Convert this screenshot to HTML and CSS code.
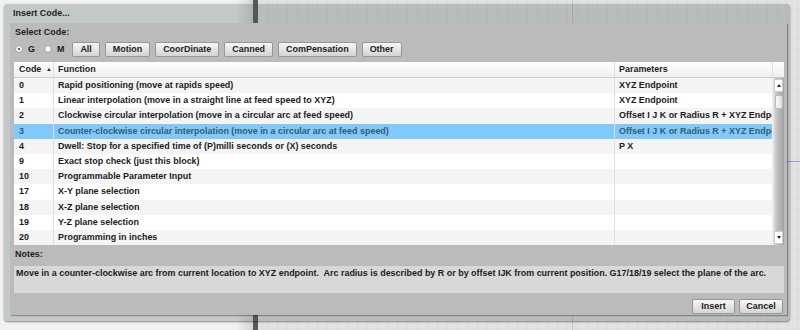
FILE: index.html
```html
<!DOCTYPE html>
<html lang="en">
<head>
    <meta charset="UTF-8">
    <meta name="viewport" content="width=device-width, initial-scale=1.0">
    <title>Insert Code</title>
    <link rel="stylesheet" href="styles.css">
</head>
<body>
    <!-- workspace behind the dialog -->
    <div class="desk">
        <div class="side"></div>
        <div class="side-edge"></div>
        <div class="split"></div>
        <div class="canvas">
            <div class="axis"></div>
            <div class="toolpath"></div>
        </div>
    </div>

    <div class="dialog">
        <div class="title">Insert Code...</div>
        <div class="panel">
            <div class="label">Select Code:</div>
            <div class="filters">
                <label class="radio checked"><span class="dot"></span>G</label>
                <label class="radio"><span class="dot"></span>M</label>
                <button class="btn">All</button>
                <button class="btn">Motion</button>
                <button class="btn">CoorDinate</button>
                <button class="btn">Canned</button>
                <button class="btn">ComPensation</button>
                <button class="btn">Other</button>
            </div>

            <div class="grid">
                <div class="head">
                    <div class="cell code">Code <span class="sort"></span></div>
                    <div class="cell fn">Function</div>
                    <div class="cell par">Parameters</div>
                    <div class="cell corner"></div>
                </div>
                <div class="body">
                    <div class="rows" id="rows"></div>
                    <div class="scrollbar">
                        <div class="sb-btn"><span class="arrow up"></span></div>
                        <div class="thumb"></div>
                        <div class="track"></div>
                        <div class="sb-btn"><span class="arrow down"></span></div>
                    </div>
                </div>
            </div>

            <div class="label">Notes:</div>
            <div class="notes">Move in a counter-clockwise arc from current location to XYZ endpoint.&nbsp; Arc radius is described by R or by offset IJK from current position. G17/18/19 select the plane of the arc.</div>

            <div class="actions">
                <button class="btn act">Insert</button>
                <button class="btn act wide">Cancel</button>
            </div>
        </div>
    </div>

    <script>
        // G codes shown in the list
        const codes = [
            { code: "0", fn: "Rapid positioning (move at rapids speed)", par: "XYZ Endpoint" },
            { code: "1", fn: "Linear interpolation (move in a straight line at feed speed to XYZ)", par: "XYZ Endpoint" },
            { code: "2", fn: "Clockwise circular interpolation (move in a circular arc at feed speed)", par: "Offset I J K or Radius R + XYZ Endpoint" },
            { code: "3", fn: "Counter-clockwise circular interpolation (move in a circular arc at feed speed)", par: "Offset I J K or Radius R + XYZ Endpoint" },
            { code: "4", fn: "Dwell: Stop for a specified time of (P)milli seconds or (X) seconds", par: "P X" },
            { code: "9", fn: "Exact stop check (just this block)", par: "" },
            { code: "10", fn: "Programmable Parameter Input", par: "" },
            { code: "17", fn: "X-Y plane selection", par: "" },
            { code: "18", fn: "X-Z plane selection", par: "" },
            { code: "19", fn: "Y-Z plane selection", par: "" },
            { code: "20", fn: "Programming in inches", par: "" },
        ];

        const rows = document.getElementById('rows');
        const selected = "3";

        codes.forEach(item => {
            const row = document.createElement('div');
            row.classList.add('row');
            if (item.code === selected) row.classList.add('sel');
            row.innerHTML = `
                <div class="cell code">${item.code}</div>
                <div class="cell fn">${item.fn}</div>
                <div class="cell par">${item.par}</div>
            `;
            rows.appendChild(row);
        });
    </script>
</body>
</html>
```

FILE: styles.css
```css
/* page */
body {
    margin: 0;
    width: 800px;
    height: 330px;
    overflow: hidden;
    position: relative;
    font-family: "Liberation Sans", Arial, sans-serif;
    font-size: 8.95px;
    font-weight: bold;
    color: #1b1b1b;
}

/* workspace behind */
.desk {
    display: flex;
    height: 330px;
}
.side {
    width: 236px;
    background: #f1f1f1;
}
.side-edge {
    width: 17px;
    background: linear-gradient(to right, #f1f1f1, #d4d4d4);
}
.split {
    width: 5px;
    background: #5a5a5a;
}
.canvas {
    flex: 1;
    position: relative;
    background-color: #e2e2e2;
    background-image:
        repeating-linear-gradient(to right, transparent 0 9px, #dbdbdb 9px 10px),
        repeating-linear-gradient(to bottom, transparent 0 9px, #dddddd 9px 10px);
}
.axis {
    position: absolute;
    left: 314px;
    top: 0;
    bottom: 0;
    width: 1px;
    background: rgba(205, 120, 120, 0.35);
}
.toolpath {
    position: absolute;
    left: 529px;
    top: 161px;
    width: 20px;
    height: 1px;
    background: #9d9ccd;
}

/* dialog */
.dialog {
    position: absolute;
    left: 4px;
    top: 4px;
    width: 786px;
    height: 317px;
    background: rgba(60, 85, 80, 0.25);
    border-radius: 4px;
    box-shadow: 0 1px 2px rgba(0, 0, 0, 0.45);
    display: flex;
    flex-direction: column;
}
.title {
    height: 19px;
    line-height: 19px;
    padding-left: 9px;
    color: #222;
}
.panel {
    height: 292px;
    margin: 0 3px 0 6px;
    padding: 0 3px 0 4px;
    box-sizing: border-box;
    background: #bbbbbb;
    box-shadow: 1px 1px 1px rgba(0, 0, 0, 0.3);
    display: flex;
    flex-direction: column;
}
.label {
    height: 18px;
    line-height: 18px;
    padding-left: 1px;
}
.panel .label + .notes {
    margin-top: 3px;
}

/* filter row */
.filters {
    height: 16px;
    display: flex;
    align-items: center;
    gap: 5px;
}
.radio {
    display: flex;
    align-items: center;
    gap: 5px;
    margin-left: 1px;
    margin-right: 3px;
}
.radio .dot {
    width: 8px;
    height: 8px;
    box-sizing: border-box;
    border-radius: 50%;
    border: 1px solid #a9a9a9;
    background: radial-gradient(circle, #fdfdfd 0, #e4e4e4 100%);
    display: flex;
    align-items: center;
    justify-content: center;
}
.radio.checked .dot::after {
    content: "";
    width: 2px;
    height: 2px;
    border-radius: 50%;
    background: #333;
}
.btn {
    height: 15px;
    padding: 0 7px;
    box-sizing: border-box;
    border: 1px solid #979797;
    border-radius: 2px;
    background: linear-gradient(#f6f6f6, #d4d4d4);
    font: inherit;
    color: #222;
    line-height: 13px;
    cursor: pointer;
}
.filters .btn {
    margin-top: 1px;
}

/* code list */
.grid {
    margin-top: 5px;
    height: 183px;
    background: #fff;
    display: flex;
    flex-direction: column;
}
.head {
    display: grid;
    grid-template-columns: 39px 561px 158px 12px;
    height: 16px;
    box-sizing: border-box;
    background: linear-gradient(#ffffff, #eeeeee);
    border-bottom: 1px solid #cfcfcf;
    line-height: 15px;
}
.cell {
    white-space: nowrap;
    overflow: hidden;
}
.cell.code {
    padding-left: 5px;
}
.cell.fn, .cell.par {
    padding-left: 4px;
    border-left: 1px solid #e0e0e0;
}
.cell.corner {
    border-left: 1px solid #e0e0e0;
}
.sort {
    display: inline-block;
    width: 0;
    height: 0;
    margin-left: 3px;
    vertical-align: 1px;
    border-left: 2px solid transparent;
    border-right: 2px solid transparent;
    border-bottom: 3px solid #333;
}
.body {
    display: flex;
    height: 167px;
}
.rows {
    width: 758px;
    overflow: hidden;
}
.row {
    display: grid;
    grid-template-columns: 39px 561px 158px;
    height: 15.2px;
    line-height: 15.2px;
}
.row:nth-child(odd) {
    background: #f4f4f4;
}
.row.sel {
    background: #80c9f8;
    color: #3b5874;
}

/* scrollbar */
.scrollbar {
    width: 12px;
    display: flex;
    flex-direction: column;
    background: linear-gradient(to right, #f4f4f4 0, #c6c6c6 35%, #a3a3a3 100%);
}
.sb-btn {
    height: 11px;
    margin: 1px 1px 0 2px;
    background: #fff;
    border: 1px solid #c9c9c9;
    display: flex;
    align-items: center;
    justify-content: center;
}
.sb-btn:last-child {
    margin: 0 1px 1px 2px;
}
.arrow {
    width: 0;
    height: 0;
    border-left: 2px solid transparent;
    border-right: 2px solid transparent;
}
.arrow.up {
    border-bottom: 3px solid #222;
}
.arrow.down {
    border-top: 3px solid #222;
}
.thumb {
    height: 12px;
    width: 6px;
    margin: 3px 0 0 3px;
    border: 1px solid #b9b9b9;
    border-radius: 2px;
    background: linear-gradient(to right, #fbfbfb, #dcdcdc);
}
.track {
    flex: 1;
}

/* notes */
.notes {
    height: 27px;
    box-sizing: border-box;
    padding: 1px 2px;
    line-height: 12px;
    background: #d8d8d8;
    white-space: nowrap;
    overflow: hidden;
}

/* dialog buttons */
.actions {
    margin-top: 6px;
    display: flex;
    justify-content: flex-end;
    gap: 4px;
    padding-right: 1px;
}
.btn.act {
    width: 43px;
    padding: 0;
}
.btn.act.wide {
    width: 44px;
}
```
